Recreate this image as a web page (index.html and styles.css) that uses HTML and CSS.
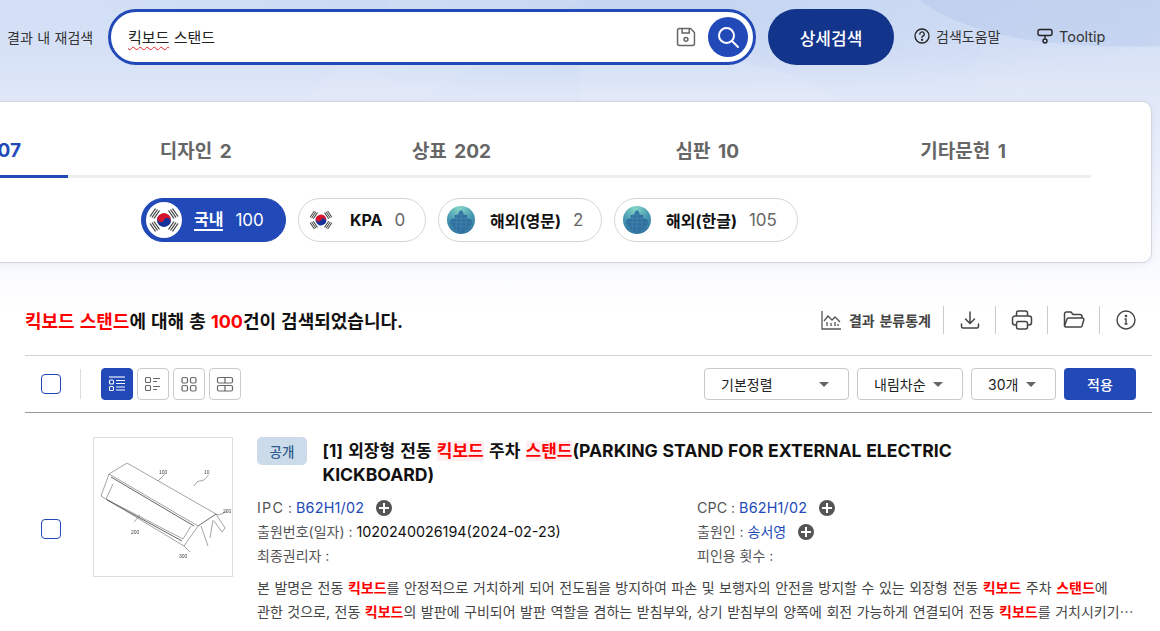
FILE: index.html
```html
<!DOCTYPE html>
<html lang="ko">
<head>
<meta charset="utf-8">
<title>검색 결과</title>
<link rel="stylesheet" href="styles.css">
</head>
<body>
<div class="page">
  <svg class="decor" width="1160" height="101" viewBox="0 0 1160 101" aria-hidden="true">
    <path d="M390 0 L580 0 C560 20 480 60 420 101 L305 101 C330 70 370 30 390 0Z" fill="#fff" opacity=".07"/>
    <path d="M920 0 C960 32 1040 50 1160 46 L1160 0Z" fill="#a9bfe6" opacity=".32"/>
    <path d="M580 56 C720 50 810 70 836 101 L580 101Z" fill="#fff" opacity=".1"/>
    <path d="M980 48 L1160 48 L1160 101 L976 101Z" fill="#fff" opacity=".06"/>
  </svg>
  <header class="top">
    <span class="top-label">결과 내 재검색</span>
    <div class="search">
      <span class="search-text"><span class="typo">킥보드</span> 스탠드</span>
      <svg class="save-ico" width="26" height="26" viewBox="0 0 20 20" fill="none" stroke="#666" stroke-width="1.150"><path d="M3.500 5A1.500 1.500 0 0 1 5 3.500H13.500L16.500 6.500V15A1.500 1.500 0 0 1 15 16.500H5A1.500 1.500 0 0 1 3.500 15Z" stroke-linejoin="round"/><path d="M7 3.500V7H12.500V3.500"/><circle cx="10" cy="11.800" r="1.500"/></svg>
      <button class="search-btn"><svg width="24" height="24" viewBox="0 0 24 24" fill="none" stroke="#fff" stroke-width="2"><circle cx="10.500" cy="10.500" r="7.500"/><path d="M16 16l6 6" stroke-linecap="round"/></svg></button>
    </div>
    <button class="adv-btn">상세검색</button>
    <a class="top-link help"><svg width="18" height="18" viewBox="0 0 18 18" fill="none" stroke="#222" stroke-width="1.300"><circle cx="9" cy="9" r="7"/><path d="M6.800 7.200A2.200 2.200 0 1 1 9.800 9.200C9.200 9.500 9 9.900 9 10.600" stroke-linecap="round"/><circle cx="9" cy="12.800" r=".5" fill="#222"/></svg>검색도움말</a>
    <a class="top-link tip"><svg width="18" height="18" viewBox="0 0 18 18" fill="none" stroke="#222" stroke-width="1.400"><rect x="2" y="2.500" width="14" height="6" rx="2"/><path d="M9 8.500v3"/><circle cx="9" cy="14" r="2"/></svg>Tooltip</a>
  </header>

  <section class="card">
    <nav class="tabs">
      <a class="tab active">특허·실용신안 107</a>
      <a class="tab">디자인 2</a>
      <a class="tab">상표 202</a>
      <a class="tab">심판 10</a>
      <a class="tab">기타문헌 1</a>
    </nav>
    <div class="pills">
      <a class="pill on">
        <svg class="flag" viewBox="0 0 36 36"><use href="#kr"/></svg>
        <b class="pill-name">국내</b><span class="pill-n">100</span>
      </a>
      <a class="pill kpa">
        <svg class="flag" viewBox="0 0 36 36"><use href="#kr"/></svg>
        <b class="pill-name">KPA</b><span class="pill-n">0</span>
      </a>
      <a class="pill en">
        <svg class="flag" viewBox="0 0 36 36"><use href="#globe"/></svg>
        <b class="pill-name">해외(영문)</b><span class="pill-n">2</span>
      </a>
      <a class="pill ko">
        <svg class="flag" viewBox="0 0 36 36"><use href="#globe"/></svg>
        <b class="pill-name">해외(한글)</b><span class="pill-n">105</span>
      </a>
    </div>
  </section>

  <div class="summary">
    <h2 class="summary-text"><em>킥보드 스탠드</em>에 대해 총 <em>100</em>건이 검색되었습니다.</h2>
    <div class="tools">
      <a class="tool stat"><svg width="22" height="22" viewBox="0 0 22 22" fill="none" stroke="#555" stroke-width="1.300"><path d="M2 2v18h19"/><path d="M4 12l4-5 4 4 3-3 5 5"/><path d="M7 17v-4M11 17v-3M15 17v-4M18 17v-2"/></svg><span>결과 분류통계</span></a>
      <a class="tool ico"><svg width="20" height="20" viewBox="0 0 20 20" fill="none" stroke="#444" stroke-width="1.500" stroke-linecap="round" stroke-linejoin="round"><path d="M10 2v11M5.500 9l4.500 4.500L14.500 9"/><path d="M1.500 14v2.500a1.500 1.500 0 0 0 1.500 1.500h14a1.500 1.500 0 0 0 1.500-1.500V14"/></svg></a>
      <a class="tool ico"><svg width="22" height="22" viewBox="0 0 22 22" fill="none" stroke="#444" stroke-width="1.500" stroke-linejoin="round"><path d="M5.500 7V4a2 2 0 0 1 2-2h7a2 2 0 0 1 2 2v3"/><path d="M5.500 16H4a2.500 2.500 0 0 1-2.500-2.500v-4A2.500 2.500 0 0 1 4 7h14a2.500 2.500 0 0 1 2.500 2.500v4A2.500 2.500 0 0 1 18 16h-1.500"/><rect x="5.500" y="12.500" width="11" height="7.500" rx="2"/></svg></a>
      <a class="tool ico"><svg width="22" height="22" viewBox="0 0 22 22" fill="none" stroke="#444" stroke-width="1.500" stroke-linejoin="round"><path d="M1.500 17V5a2 2 0 0 1 2-2h4.500l2 2.500h7a2 2 0 0 1 2 2V9"/><path d="M1.500 17l2.500-7a1.500 1.500 0 0 1 1.400-1h14a1.500 1.500 0 0 1 1.400 2l-1.800 6a1.500 1.500 0 0 1-1.400 1H3a1.500 1.500 0 0 1-1.500-1Z"/></svg></a>
      <a class="tool ico"><svg width="20" height="20" viewBox="0 0 20 20" fill="none" stroke="#444" stroke-width="1.400"><circle cx="10" cy="10" r="9"/><path d="M8.500 9H10v5M8.500 14h3"/><circle cx="10" cy="6" r=".6" fill="#444"/></svg></a>
    </div>
  </div>

  <div class="toolbar">
    <span class="check"></span>
    <span class="vline"></span>
    <div class="views">
      <a class="view on"><svg width="18" height="18" viewBox="0 0 18 18" fill="none" stroke="#fff" stroke-width="1.100"><path d="M1 2h16"/><rect x="1.500" y="5" width="4" height="4" rx="1"/><rect x="1.500" y="11.500" width="4" height="4" rx="1"/><path d="M8 5.500h9M8 8.500h9M8 12h9M8 15h9"/></svg></a>
      <a class="view"><svg width="18" height="18" viewBox="0 0 18 18" fill="none" stroke="#666" stroke-width="1.100"><rect x="1.500" y="2.500" width="5" height="5" rx="1"/><rect x="1.500" y="10.500" width="5" height="5" rx="1"/><path d="M9 3.500h7M9 6.500h4M9 11.500h7M9 14.500h4"/></svg></a>
      <a class="view"><svg width="18" height="18" viewBox="0 0 18 18" fill="none" stroke="#666" stroke-width="1.200"><rect x="2" y="2.500" width="5.500" height="5.500" rx="1.500"/><rect x="10.500" y="2.500" width="5.500" height="5.500" rx="1.500"/><rect x="2" y="10.500" width="5.500" height="5.500" rx="1.500"/><rect x="10.500" y="10.500" width="5.500" height="5.500" rx="1.500"/></svg></a>
      <a class="view"><svg width="18" height="18" viewBox="0 0 18 18" fill="none" stroke="#666" stroke-width="1.200"><rect x="1.500" y="2.500" width="15" height="5.500" rx="1.500"/><rect x="1.500" y="10.500" width="15" height="5.500" rx="1.500"/><path d="M9 2.500V8M9 10.500V16"/></svg></a>
    </div>
    <div class="sorts">
      <a class="sel s1">기본정렬<i class="caret"></i></a>
      <a class="sel s2">내림차순<i class="caret"></i></a>
      <a class="sel s3">30개<i class="caret"></i></a>
      <button class="apply">적용</button>
    </div>
  </div>

  <article class="item">
    <span class="check"></span>
    <figure class="thumb">
      <svg width="138" height="138" viewBox="0 0 138 138" fill="none" stroke="#666" stroke-width=".6">
        <path d="M15 36L33 25 122 76 104 88Z"/>
        <path d="M15 36L7 58 90 108 104 88"/>
        <path d="M19 46L12 61 89 101 97 88"/>
        <path d="M17 39L100 88M13 62L88 103" stroke-width="1"/>
        <path d="M104 88L122 76 131 90 128 94 120 83"/>
        <path d="M107 88L114 108M119 82L116 100"/>
        <path d="M90 108L96 114"/>
        <path d="M71 36l-7 7M40 84l6-7"/>
        <path d="M100 48l3-4c3-2 5 0 8-3 2-2 3-3 3-4" stroke-width=".6"/>
        <path d="M122 76c4 2 7-1 11-3"/>
        <g class="thumb-num"><text x="65" y="36">100</text><text x="110" y="36">10</text><text x="37" y="96">200</text><text x="129" y="75">200</text><text x="85" y="120">300</text></g>
      </svg>
    </figure>
    <div class="item-body">
      <div class="item-head">
        <span class="badge">공개</span>
        <h3 class="title">[1] 외장형 전동 <mark>킥보드</mark> 주차 <mark>스탠드</mark><span class="la">(PARKING STAND FOR EXTERNAL ELECTRIC KICKBOARD)</span></h3>
      </div>
      <div class="meta">
        <div class="meta-row"><span class="k"><span class="la ipc">IPC</span> : </span><a class="lnk la">B62H1/02</a><i class="plus"></i></div>
        <div class="meta-row"><span class="k"><span class="la">CPC</span> : </span><a class="lnk la">B62H1/02</a><i class="plus"></i></div>
        <div class="meta-row"><span class="k">출원번호(일자) : </span><span class="v la">1020240026194(2024-02-23)</span></div>
        <div class="meta-row"><span class="k">출원인 : </span><a class="lnk">송서영</a><i class="plus"></i></div>
        <div class="meta-row"><span class="k">최종권리자 : </span></div>
        <div class="meta-row"><span class="k">피인용 횟수 : </span></div>
      </div>
      <p class="abstract">본 발명은 전동 <em>킥보드</em>를 안정적으로 거치하게 되어 전도됨을 방지하여 파손 및 보행자의 안전을 방지할 수 있는 외장형 전동 <em>킥보드</em> 주차 <em>스탠드</em>에<br>관한 것으로, 전동 <em>킥보드</em>의 발판에 구비되어 발판 역할을 겸하는 받침부와, 상기 받침부의 양쪽에 회전 가능하게 연결되어 전동 <em>킥보드</em>를 거치시키기⋯</p>
    </div>
  </article>

  <svg class="defs" width="0" height="0" aria-hidden="true">
    <defs>
      <radialGradient id="gl" cx=".45" cy=".1" r=".95"><stop offset="0" stop-color="#85d6c6"/><stop offset=".5" stop-color="#4a9db4"/><stop offset="1" stop-color="#2e6f9f"/></radialGradient>
      <g id="kr">
        <circle cx="18" cy="18" r="18" fill="#fff"/>
        <g transform="rotate(25 18 18)">
          <path d="M11 18a7 7 0 0 1 14 0Z" fill="#d3142c"/>
          <path d="M11 18a7 7 0 0 0 14 0Z" fill="#16329a"/>
          <circle cx="14.500" cy="18" r="3.500" fill="#d3142c"/>
          <circle cx="21.500" cy="18" r="3.500" fill="#16329a"/>
        </g>
        <g fill="none" stroke="#444" stroke-width="1.300">
          <path d="M6 15.500l5.500-8M8 16.500l5.500-8M4 14.500l5.500-8"/>
          <path d="M30 15.500l-5.500-8M28 16.500l-5.500-8M32 14.500l-5.500-8"/>
          <path d="M6 20.500l5.500 8M8 19.500l5.500 8M4 21.500l5.500 8"/>
          <path d="M30 20.500l-5.500 8M28 19.500l-5.500 8M32 21.500l-5.500 8"/>
        </g>
      </g>
      <g id="globe">
        <circle cx="18" cy="18" r="18" fill="url(#gl)"/>
        <path d="M18 5l2.500 2.500 1 3.500 5 1-1 3.500 5.500 2 1.500 4-4 6-6 5-4.500 2-4.500-2-6-5-4-6 1.500-4 5.500-2-1-3.500 5-1 1-3.500Z" fill="#2f6d9f" opacity=".9"/>
        <g stroke="#6fa9c7" stroke-width=".4" fill="none" opacity=".7"><path d="M5 21h26M7 26h22M9 16h18M18 9v26M12 14v20M24 14v20"/></g>
      </g>
    </defs>
  </svg>
</div>
</body>
</html>
```
FILE: styles.css
```css
* { box-sizing: border-box; }
html, body { margin: 0; padding: 0; height: 100%; overflow: hidden; background: #fff; }
body { font-family: Inter, "Noto Sans CJK KR", sans-serif; color: #111; }
a { color: inherit; text-decoration: none; }
button { font-family: inherit; border: 0; cursor: pointer; }
h2, h3, p, figure { margin: 0; }
em { font-style: normal; }

.page {
  position: relative;
  width: 1160px;
  height: 631px;
  overflow: hidden;
  background:
    radial-gradient(ellipse 560px 80px at 650px 15px, rgba(184, 203, 238, .55), rgba(184, 203, 238, 0)),
    linear-gradient(180deg, #d2dff5 0, #d6e1f6 50px, #e0e8f8 101px, #f6f8fd 250px, #fafbfe 275px, #fff 310px);
}
.decor { position: absolute; left: 0; top: 0; }
.defs { position: absolute; }
.la { font-size: 1.025em; }

.top { position: relative; display: flex; align-items: center; height: 101px; padding: 9px 0 36px 7px; }
.top-label { font-size: 14px; color: #333; width: 101px; white-space: nowrap; word-spacing: .5px; }
.search {
  display: flex; align-items: center; width: 648px; height: 56px;
  padding: 0 5px 0 17px; background: #fff; border: 3px solid #2149b8; border-radius: 28px;
}
.search-text { flex: 1; font-size: 15px; color: #222; position: relative; top: -1px; }
.typo { text-decoration: underline wavy #e8262c; text-decoration-thickness: 1.200px; text-underline-offset: 3px; }
.save-ico { margin-right: 9px; }
.search-btn {
  width: 40px; height: 40px; border-radius: 50%; background: #2149b8;
  display: flex; align-items: center; justify-content: center; padding: 0;
}
.adv-btn {
  width: 126px; height: 56px; margin-left: 12px; border-radius: 28px;
  background: #12348a; color: #fff; font-size: 17px; font-weight: 500;
}
.top-link { display: flex; align-items: center; gap: 5px; font-size: 14px; color: #333; white-space: nowrap; position: relative; top: -1px; }
.help { margin-left: 19px; width: 123px; }
.tip { font-size: 14.500px; }

.card {
  position: relative;
  width: 1402px; height: 162px; margin-left: -250px;
  background: #fff; border: 1px solid #d2d6de; border-radius: 10px;
  box-shadow: 0 2px 6px rgba(70, 90, 140, .08);
  padding: 20px 0 0 61px;
}
.tabs { display: flex; width: 1279px; border-bottom: 3px solid #eceef1; height: 56px; }
.tab {
  flex: 0 0 20%; height: 56px; display: flex; align-items: center; justify-content: center;
  font-size: 19px; font-weight: 700; color: #666; white-space: nowrap; padding-bottom: 1px; word-spacing: 3px;
}
.tab.active { color: #2149b8; border-bottom: 3px solid #2149b8; padding-left: 12px; }
.pills { display: flex; gap: 12px; margin: 20px 0 0 329px; }
.pill {
  display: flex; align-items: center; height: 44px; padding: 0 8px;
  border: 1px solid #d6d6d6; border-radius: 22px; background: #fff; font-size: 16px; white-space: nowrap;
}
.pill .flag { width: 28px; height: 28px; flex: none; }
.pill-name { font-weight: 700; color: #111; margin-left: 15px; }
.pill-n { margin-left: 12px; font-size: 17px; color: #666; }
.kpa { width: 128px; }
.en { width: 164px; }
.ko { width: 184px; }
.pill.on { width: 145px; background: #2149b8; border-color: #2149b8; padding-left: 4px; }
.pill.on .flag { width: 36px; height: 36px; }
.pill.on .pill-name { color: #fff; border-bottom: 2px solid #fff; line-height: 20px; margin-left: 12px; }
.pill.on .pill-n { color: #fff; }

.summary { display: flex; align-items: center; justify-content: space-between; height: 93px; margin: 0 8px 0 25px; border-bottom: 1px solid #d2d2d2; padding-top: 22px; }
.summary-text { font-size: 18px; font-weight: 700; color: #111; word-spacing: .8px; }
.summary-text em { color: #f00; }
.tools { display: flex; align-items: center; }
.tool { display: flex; align-items: center; justify-content: center; height: 28px; }
.tool.stat { gap: 7px; font-size: 14px; font-weight: 700; color: #444; padding-right: 13px; margin-right: -1px; word-spacing: 1.500px; }
.tool.ico { width: 52px; border-left: 1px solid #ccc; }
.tool.ico:last-child { width: 53px; }

.toolbar { display: flex; align-items: center; height: 57px; margin: 0 8px 0 25px; border-bottom: 1px solid #999; padding-left: 16px; }
.check { display: block; flex: none; width: 20px; height: 20px; border: 1px solid #2149b8; border-radius: 4px; background: #fff; }
.vline { width: 1px; height: 30px; background: #ddd; margin-left: 19px; }
.views { display: flex; gap: 4px; margin-left: 20px; }
.view { width: 32px; height: 32px; border: 1px solid #ccc; border-radius: 4px; display: flex; align-items: center; justify-content: center; background: #fff; }
.view.on { background: #2149b8; border-color: #2149b8; }
.sorts { display: flex; align-items: center; margin-left: auto; margin-right: 16px; gap: 8px; }
.sel {
  display: flex; align-items: center; justify-content: space-between;
  height: 32px; border: 1px solid #c8c8c8; border-radius: 4px; background: #fff; font-size: 14px; color: #222;
}
.s1 { width: 145px; padding: 0 19px 0 16px; }
.s2 { width: 106px; padding: 0 19px 0 16px; }
.s3 { width: 85px; padding: 0 19px 0 16px; }
.caret { width: 0; height: 0; border-left: 5px solid transparent; border-right: 5px solid transparent; border-top: 5px solid #666; }
.apply { width: 72px; height: 32px; background: #2149b8; color: #fff; border-radius: 4px; font-size: 14px; font-weight: 500; }

.item { display: flex; align-items: flex-start; margin-left: 41px; padding-top: 24px; }
.item > .check { margin-top: 82px; }
.thumb { width: 140px; height: 140px; border: 1px solid #ddd; margin-left: 32px; flex: none; background: #fff; }
.thumb svg { display: block; filter: blur(.35px); }
.thumb-num text { font-size: 5px; fill: #444; stroke: none; font-family: "Liberation Sans", sans-serif; }
.item-body { margin-left: 24px; width: 880px; }
.item-head { display: flex; align-items: flex-start; }
.badge { flex: none; width: 50px; height: 28px; background: #ccdbe9; color: #2f5b8e; border-radius: 5px; font-size: 13.500px; font-weight: 500; display: flex; align-items: center; justify-content: center; }
.title { margin-left: 15.500px; width: 680px; font-size: 17px; font-weight: 700; line-height: 24px; color: #111; position: relative; top: 2px; word-spacing: 1.200px; }
.title .la { font-size: 1.035em; word-spacing: .5px; }
.title mark { background: #fdeef1; color: #f00; }
.meta { display: grid; grid-template-columns: 440px 1fr; grid-auto-rows: 24px; margin-top: 11px; font-size: 14px; line-height: 24px; }
.meta-row { display: flex; align-items: center; white-space: pre; }
.k { color: #555; }
.k .ipc { letter-spacing: 1.200px; }
.lnk { color: #2149b8; }
.lnk.la { letter-spacing: .2px; }
.v { color: #111; }
.plus { position: relative; width: 16px; height: 16px; border-radius: 50%; background: #555; margin-left: 12px; }
.plus::before, .plus::after { content: ""; position: absolute; background: #fff; }
.plus::before { left: 3px; right: 3px; top: 7px; height: 2px; }
.plus::after { top: 3px; bottom: 3px; left: 7px; width: 2px; }
.abstract { margin-top: 8px; font-size: 14px; line-height: 24px; color: #444; white-space: nowrap; word-spacing: .6px; }
.abstract em { color: #f00; font-weight: 700; }
```
